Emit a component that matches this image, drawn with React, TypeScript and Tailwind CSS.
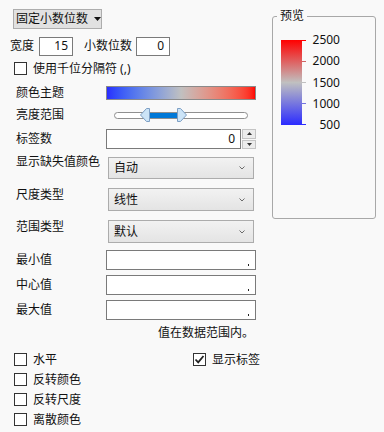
import React from "react";

const font = { fontFamily: '"Noto Sans", "Noto Sans CJK SC", sans-serif' };

function CheckBox({ label, checked = false }: { label: string; checked?: boolean }) {
  return (
    <div className="flex items-center h-[13px]">
      <span className="flex h-[13px] w-[13px] shrink-0 items-center justify-center border border-[#333333] bg-white">
        {checked && (
          <svg width="11" height="11" viewBox="0 0 11 11">
            <path d="M1.5 5.5 L4.2 8.3 L9.5 2" fill="none" stroke="#222" strokeWidth="1.8" />
          </svg>
        )}
      </span>
      <span className="ml-[6px] text-[12px] leading-[16px] whitespace-nowrap">{label}</span>
    </div>
  );
}

function Chevron() {
  return (
    <svg width="6" height="4" viewBox="0 0 6 4">
      <path d="M0.5 0.5 L3 3 L5.5 0.5" fill="none" stroke="#6b6b6b" strokeWidth="1" />
    </svg>
  );
}

function SelectRow({ label, value, top, h, labelShift }: { label: string; value: string; top: string; h: string; labelShift: string }) {
  return (
    <div className={`flex items-start pl-[16px] ${top}`}>
      <span className={`w-[90px] shrink-0 text-[12px] leading-[16px] ${labelShift}`}>{label}</span>
      <div
        className={`ml-[2px] flex w-[146px] items-center justify-between border border-[#acacac] bg-gradient-to-b from-[#f2f2f2] to-[#e4e4e4] pl-[5px] pr-[8px] ${h}`}
      >
        <span className="text-[12px] leading-[16px]">{value}</span>
        <Chevron />
      </div>
    </div>
  );
}

function ValueRow({ label, top }: { label: string; top: string }) {
  return (
    <div className={`flex items-center h-[20px] pl-[16px] ${top}`}>
      <span className="w-[90px] shrink-0 text-[12px] leading-[16px]">{label}</span>
      <div className="flex h-[20px] w-[150px] items-end justify-end border border-[#7a7a7a] bg-white pr-[6px] pb-[3px]">
        <span className="block h-[2px] w-[1.5px] bg-[#222]" />
      </div>
    </div>
  );
}

export default function App() {
  return (
    <div className="flex h-[432px] w-[384px] bg-[#f9f9f9] text-[#111]" style={font}>
      <div className="flex w-[272px] shrink-0 flex-col">
        <div className="ml-[13px] mt-[9px] flex h-[20px] w-[89px] items-center border border-[#adadad] bg-[#e1e1e1] pl-[2px]">
          <span className="text-[12px] leading-[16px]">固定小数位数</span>
          <svg className="ml-[6px]" width="7" height="4" viewBox="0 0 7 4">
            <path d="M0 0 L7 0 L3.5 4 Z" fill="#111" />
          </svg>
        </div>

        <div className="mt-[8px] flex h-[18px] items-center pl-[10px]">
          <span className="text-[12px] leading-[16px]">宽度</span>
          <div className="ml-[5px] flex h-[19px] w-[34px] items-center justify-end border border-[#7a7a7a] bg-white pr-[4px] text-[12px]">15</div>
          <span className="ml-[11px] text-[12px] leading-[16px]">小数位数</span>
          <div className="ml-[4px] flex h-[19px] w-[34px] items-center justify-end border border-[#7a7a7a] bg-white pr-[5px] text-[12px]">0</div>
        </div>

        <div className="mt-[7px] pl-[14px]">
          <CheckBox label="使用千位分隔符 (,)" />
        </div>

        <div className="mt-[11px] flex h-[14px] items-center pl-[16px]">
          <span className="w-[90px] shrink-0 text-[12px] leading-[16px]">颜色主题</span>
          <div className="h-[14px] w-[150px] border border-[#8a8a8a] bg-gradient-to-r from-[#2b2bff] via-[#c0c0c0] to-[#ff0000]" />
        </div>

        <div className="mt-[7px] flex h-[16px] items-center pl-[16px]">
          <span className="w-[90px] shrink-0 text-[12px] leading-[16px]">亮度范围</span>
          <svg className="ml-[7px]" width="136" height="16" viewBox="0 0 136 16">
            <rect x="1.5" y="5.5" width="133" height="6" rx="3" fill="#fff" stroke="#8f8f8f" />
            <rect x="35" y="6" width="30" height="5" fill="#0078d7" />
            <path d="M27.5 8 L33.5 1.5 L36.5 1.5 L36.5 14.5 L33.5 14.5 Z" fill="#cce4f7" stroke="#7d9fc4" />
            <path d="M73.5 8 L67.5 1.5 L64.5 1.5 L64.5 14.5 L67.5 14.5 Z" fill="#cce4f7" stroke="#7d9fc4" />
          </svg>
        </div>

        <div className="mt-[6px] flex h-[20px] items-center pl-[16px]">
          <span className="w-[90px] shrink-0 text-[12px] leading-[16px]">标签数</span>
          <div className="flex h-[20px] w-[135px] items-center justify-end border border-[#7a7a7a] bg-white pr-[5px] text-[12px]">0</div>
          <div className="ml-[1px] flex h-[20px] w-[14px] flex-col gap-[1px]">
            <div className="flex flex-1 items-center justify-center border border-[#c4c4c4] bg-[#ececec]">
              <svg width="5" height="3" viewBox="0 0 5 3"><path d="M0 3 L5 3 L2.5 0 Z" fill="#333" /></svg>
            </div>
            <div className="flex flex-1 items-center justify-center border border-[#c4c4c4] bg-[#ececec]">
              <svg width="5" height="3" viewBox="0 0 5 3"><path d="M0 0 L5 0 L2.5 3 Z" fill="#333" /></svg>
            </div>
          </div>
        </div>

        <SelectRow label="显示缺失值颜色" value="自动" top="mt-[8px]" h="h-[22px]" labelShift="-mt-[3px]" />
        <SelectRow label="尺度类型" value="线性" top="mt-[9px]" h="h-[23px]" labelShift="-mt-[1px]" />
        <SelectRow label="范围类型" value="默认" top="mt-[9px]" h="h-[23px]" labelShift="-mt-[1px]" />

        <ValueRow label="最小值" top="mt-[7px]" />
        <ValueRow label="中心值" top="mt-[5px]" />
        <ValueRow label="最大值" top="mt-[5px]" />

        <div className="mt-[5px] pl-[158px] text-[12px] leading-[16px]">值在数据范围内。</div>

        <div className="mt-[12px] grid grid-cols-[179px_auto] gap-y-[7px] pl-[14px]">
          <CheckBox label="水平" />
          <CheckBox label="显示标签" checked />
          <CheckBox label="反转颜色" />
          <div />
          <CheckBox label="反转尺度" />
          <div />
          <CheckBox label="离散颜色" />
        </div>
      </div>

      <fieldset className="mt-[9px] h-[210px] w-[104px] rounded-[3px] border border-[#a8a8a8]">
        <legend className="ml-[4px] px-[3px] text-[12px] leading-[14px]">预览</legend>
        <div className="mt-[17px] flex pl-[8px]">
          <svg width="25" height="86" viewBox="0 0 25 86">
            <defs>
              <linearGradient id="pv" x1="0" y1="0" x2="0" y2="1">
                <stop offset="0" stopColor="#ff0000" />
                <stop offset="0.5" stopColor="#c0c0c0" />
                <stop offset="1" stopColor="#2b2bff" />
              </linearGradient>
            </defs>
            <rect x="0" y="0" width="21" height="85" fill="url(#pv)" />
            <line x1="21" y1="0.5" x2="25" y2="0.5" stroke="#ff0000" />
            <line x1="21" y1="21.5" x2="25" y2="21.5" stroke="#d06464" />
            <line x1="21" y1="42.5" x2="25" y2="42.5" stroke="#c0c0c0" />
            <line x1="21" y1="63.5" x2="25" y2="63.5" stroke="#7474e0" />
            <line x1="21" y1="84.5" x2="25" y2="84.5" stroke="#2b2bff" />
          </svg>
          <div className="-mt-[7px] flex h-[99px] w-[34px] flex-col justify-between text-right text-[12px] leading-[14px]">
            <span>2500</span>
            <span>2000</span>
            <span>1500</span>
            <span>1000</span>
            <span>500</span>
          </div>
        </div>
      </fieldset>
    </div>
  );
}
